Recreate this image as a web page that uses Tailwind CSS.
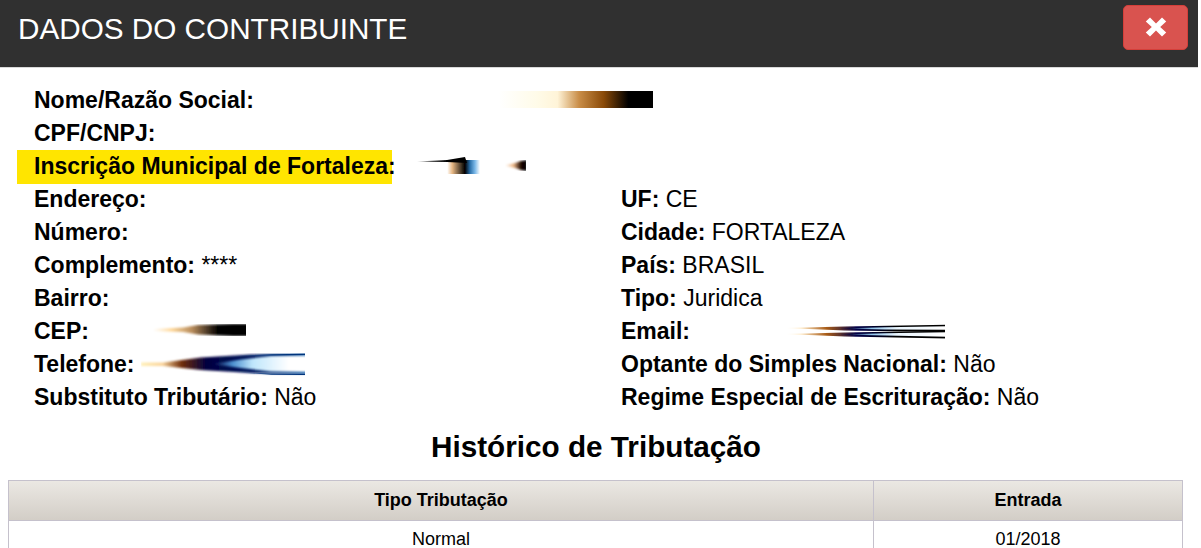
<!DOCTYPE html>
<html lang="pt">
<head>
<meta charset="utf-8">
<script src="https://cdn.jsdelivr.net/npm/@tailwindcss/browser@4"></script>
</head>
<body class="bg-white font-['Liberation_Sans',Arial,sans-serif] text-black overflow-hidden">
<svg width="0" height="0" class="absolute">
  <defs>
    <filter id="soft" x="-10%" y="-40%" width="120%" height="180%"><feGaussianBlur stdDeviation="0.9"/></filter>
    <filter id="softer" x="-10%" y="-40%" width="120%" height="180%"><feGaussianBlur stdDeviation="0.45"/></filter>
    <linearGradient id="telOuter" gradientUnits="userSpaceOnUse" x1="0" x2="164" y1="0" y2="0">
      <stop offset="0" stop-color="#fff0b8"/><stop offset=".13" stop-color="#fbd49a"/><stop offset=".25" stop-color="#6e2c08"/><stop offset=".4" stop-color="#000040"/><stop offset=".7" stop-color="#001a60"/><stop offset="1" stop-color="#0050a0"/>
    </linearGradient>
    <linearGradient id="telInner" gradientUnits="userSpaceOnUse" x1="0" x2="164" y1="0" y2="0">
      <stop offset=".44" stop-color="#000040"/><stop offset=".56" stop-color="#4c90d0"/><stop offset=".68" stop-color="#bfe6fc"/><stop offset=".9" stop-color="#fff"/>
    </linearGradient>
    <linearGradient id="telEdge" gradientUnits="userSpaceOnUse" x1="0" x2="164" y1="0" y2="0">
      <stop offset=".55" stop-color="#003080" stop-opacity="0"/><stop offset=".8" stop-color="#00347c"/><stop offset="1" stop-color="#00347c"/>
    </linearGradient>
    <linearGradient id="cepFill" gradientUnits="userSpaceOnUse" x1="0" x2="93" y1="0" y2="0">
      <stop offset="0" stop-color="#fff"/><stop offset=".2" stop-color="#ffd89a"/><stop offset=".42" stop-color="#b88c5c"/><stop offset=".7" stop-color="#000"/><stop offset="1" stop-color="#000"/>
    </linearGradient>
    <linearGradient id="mailOuter" gradientUnits="userSpaceOnUse" x1="0" x2="160" y1="0" y2="0">
      <stop offset="0" stop-color="#fff"/><stop offset=".1" stop-color="#ffe9c4"/><stop offset=".26" stop-color="#a85c18"/><stop offset=".45" stop-color="#000048"/><stop offset=".7" stop-color="#000"/><stop offset="1" stop-color="#000"/>
    </linearGradient>
    <linearGradient id="mailInner" gradientUnits="userSpaceOnUse" x1="0" x2="160" y1="0" y2="0">
      <stop offset=".4" stop-color="#00003c"/><stop offset=".54" stop-color="#8fc4ec"/><stop offset=".7" stop-color="#eaf6ff"/><stop offset="1" stop-color="#fff"/>
    </linearGradient>
    <linearGradient id="inscBlock" gradientUnits="userSpaceOnUse" x1="0" x2="63" y1="0" y2="0">
      <stop offset=".48" stop-color="#fff"/><stop offset=".56" stop-color="#e8b884"/><stop offset=".76" stop-color="#000"/><stop offset=".84" stop-color="#2a6ea8"/><stop offset=".92" stop-color="#7ab8e8"/><stop offset="1" stop-color="#fff"/>
    </linearGradient>
    <linearGradient id="inscLine" gradientUnits="userSpaceOnUse" x1="0" x2="50" y1="0" y2="0">
      <stop offset="0" stop-color="#fff"/><stop offset=".3" stop-color="#555"/><stop offset=".6" stop-color="#000"/><stop offset="1" stop-color="#000"/>
    </linearGradient>
    <linearGradient id="inscDot" gradientUnits="userSpaceOnUse" x1="0" x2="21" y1="0" y2="0">
      <stop offset="0" stop-color="#fff"/><stop offset=".4" stop-color="#eeb888"/><stop offset=".75" stop-color="#200800"/><stop offset="1" stop-color="#000"/>
    </linearGradient>
  </defs>
</svg>
<div class="w-[1198px] h-[548px] overflow-hidden">
  <header class="h-[68px] bg-[#303030] border-b border-[#d9d9d9] flex items-center justify-between pl-[18px] pr-[10px]">
    <h1 class="text-[29.7px] leading-none font-normal text-white -mt-[9px]">DADOS DO CONTRIBUINTE</h1>
    <button class="w-[65px] h-[45px] -mt-[13px] rounded-[5px] bg-[#d9534f] border border-[#d43f3a] flex items-center justify-center">
      <svg width="24" height="24" viewBox="0 0 20 20"><path d="M5 2 10 7 15 2 18.500 5.500 13.500 10 18.500 14.500 15 18 10 13 5 18 1.500 14.500 6.500 10 1.500 5.500Z" fill="#fff"/></svg>
    </button>
  </header>
  <section class="grid grid-cols-[587px_1fr] auto-rows-[33px] pl-[34px] pt-[16px] text-[23px] leading-[33px]">
    <div class="col-span-2 relative">
      <b>Nome/Razão Social:</b>
      <span class="absolute left-[465px] top-[7px] w-[154px] h-[17px] bg-[linear-gradient(90deg,#fff_0%,#fffbe8_25%,#fff4d8_38%,#c98d47_52%,#8a4a08_68%,#000_84%,#000_100%)]"></span>
    </div>
    <div class="col-span-2"><b>CPF/CNPJ:</b></div>
    <div class="col-span-2 relative">
      <span class="absolute -left-[17px] top-0 w-[375px] h-[34px] bg-[#ffe500]"></span>
      <b class="relative">Inscrição Municipal de Fortaleza:</b>
      <svg class="absolute left-[383px] top-[7px]" width="63" height="17" viewBox="0 0 63 17">
        <rect x="28" y="3" width="35" height="14" fill="url(#inscBlock)" filter="url(#softer)"/>
        <path d="M0 4.500 30 3 48 0 50 6 30 5 0 5Z" fill="url(#inscLine)" filter="url(#softer)"/>
      </svg>
      <svg class="absolute left-[471px] top-[10px]" width="21" height="11" viewBox="0 0 21 11"><path d="M0 5 10 3 16 1 22 0 22 11 16 10 10 8 0 6Z" fill="url(#inscDot)" filter="url(#soft)"/></svg>
    </div>
    <div><b>Endereço:</b></div><div><b>UF:</b> CE</div>
    <div><b>Número:</b></div><div><b>Cidade:</b> FORTALEZA</div>
    <div><b>Complemento:</b> ****</div><div><b>País:</b> BRASIL</div>
    <div><b>Bairro:</b></div><div><b>Tipo:</b> Juridica</div>
    <div class="relative"><b>CEP:</b>
      <svg class="absolute left-[119px] top-[9px]" width="93" height="12" viewBox="0 0 93 12"><path d="M0 5 30 3.500 45 1 80 0 100 0 100 12 80 12 45 10.500 30 8 0 7Z" fill="url(#cepFill)" filter="url(#soft)"/></svg>
    </div>
    <div class="relative"><b>Email:</b>
      <svg class="absolute left-[164px] top-[9px]" width="160" height="15" viewBox="0 0 160 15">
        <path d="M0 4 60 2.500 180 0.300 180 8.300 60 6.500Z" fill="url(#mailOuter)" filter="url(#softer)"/>
        <path d="M0 10 60 8.500 180 6.300 180 14.800 60 12.500Z" fill="url(#mailOuter)" filter="url(#softer)"/>
        <path d="M55 4.500 100 3.300 180 1.900 180 6 100 5.400Z" fill="url(#mailInner)" filter="url(#softer)"/>
        <path d="M55 10.500 100 9.300 180 7.900 180 13 100 11.400Z" fill="url(#mailInner)" filter="url(#softer)"/>
      </svg>
    </div>
    <div class="relative"><b>Telefone:</b>
      <svg class="absolute left-[107px] top-[5px]" width="164" height="23" viewBox="0 0 164 23">
        <path d="M0 9.500 22 9.500 60 4.500 110 1.500 190 0.500 190 21.500 110 20 60 17 22 13 0 13Z" fill="url(#telOuter)" filter="url(#soft)"/>
        <path d="M70 11 100 6.500 130 3 190 2 190 19.500 130 18.500 100 15Z" fill="url(#telInner)" filter="url(#soft)"/>
        <path d="M90 3.200 130 1.200 164 0.800 164 2 130 2.600Z" fill="url(#telEdge)"/>
        <path d="M90 19 130 20.400 164 20.800 164 22 130 21.800Z" fill="url(#telEdge)"/>
      </svg>
    </div>
    <div><b>Optante do Simples Nacional:</b> Não</div>
    <div><b>Substituto Tributário:</b> Não</div><div><b>Regime Especial de Escrituração:</b> Não</div>
  </section>
  <h2 class="text-center font-bold text-[29.7px] leading-[33px] mt-[16px] ml-[-6px]">Histórico de Tributação</h2>
  <table class="ml-[8px] mt-[17px] w-[1175px] table-fixed border-collapse text-[18px]">
    <thead>
      <tr class="h-[40px] bg-[linear-gradient(180deg,#ebe8e3,#d2cdc6)]">
        <th class="border border-[#c5c1cc] w-[865px] font-bold">Tipo Tributação</th>
        <th class="border border-[#c5c1cc] font-bold">Entrada</th>
      </tr>
    </thead>
    <tbody>
      <tr class="h-[38px] text-center"><td class="border border-[#c5c1cc]">Normal</td><td class="border border-[#c5c1cc]">01/2018</td></tr>
    </tbody>
  </table>
</div>
</body>
</html>
